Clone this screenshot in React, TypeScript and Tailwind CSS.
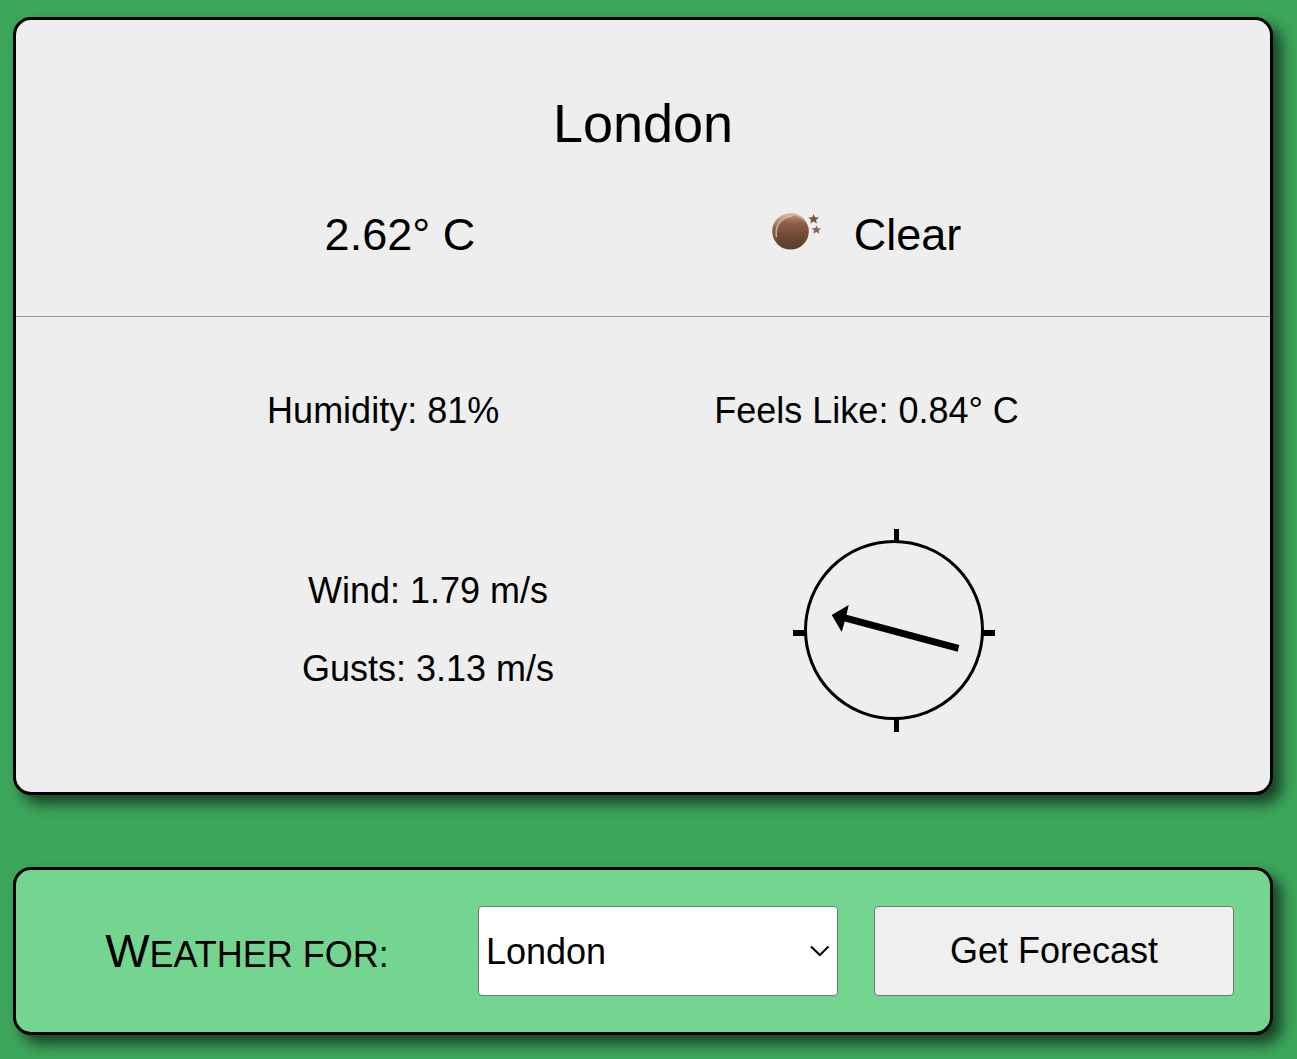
import { useState } from "react";

const cardShadow = "shadow-[9px_9px_14px_rgba(0,0,0,0.6)]";

function NightIcon() {
  return (
    <svg viewBox="-2 0 90 90" className="size-[90px] shrink-0" role="img" aria-label="Clear night">
      <defs>
        <linearGradient id="moonBody" x1="0" y1="0" x2="0" y2="1">
          <stop offset="0" stopColor="#b98c70" />
          <stop offset="0.25" stopColor="#8a5d44" />
          <stop offset="0.6" stopColor="#704a35" />
          <stop offset="1" stopColor="#5c3d2e" />
        </linearGradient>
        <linearGradient id="moonRim" x1="0" y1="0" x2="0" y2="1">
          <stop offset="0" stopColor="#dcc0af" />
          <stop offset="0.4" stopColor="#8a6049" />
          <stop offset="1" stopColor="#5a3b2c" />
        </linearGradient>
        <filter id="moonSoft">
          <feGaussianBlur stdDeviation="0.7" />
        </filter>
      </defs>
      <g filter="url(#moonSoft)">
        <circle cx="40.500" cy="41.300" r="18.300" fill="url(#moonRim)" />
        <circle cx="42" cy="42" r="16.300" fill="url(#moonBody)" />
        <path d="M26.500 47C24.500 36 31 27 42 26" fill="none" stroke="#e3c5b2" strokeWidth="1.500" opacity="0.8" />
        <path d="M63.500 24l1.500 3.300 3.900.2-2.900 2.400 1 3.600-3.400-2-3.200 2 .8-3.600-2.900-2.400 3.900-.2z" fill="#7b5340" />
        <path d="M66.500 35.500l1.300 2.900 3.400.2-2.600 2.100.8 3-2.800-1.600-3.300 1.500.8-3-2.600-2 3.600-.3z" fill="#8b614b" />
      </g>
    </svg>
  );
}

function WindCompass() {
  return (
    <svg viewBox="0 0 180 180" className="size-[180px] shrink-0 overflow-visible" role="img" aria-label="Wind direction">
      <circle cx="90" cy="90" r="88.500" fill="none" stroke="#000" strokeWidth="3" />
      <path d="M90-11h5V2h-5zM90 178h5v14h-5zM-11 90H2v6H-11zM178 90h13v6h-13z" />
      <path d="M27.700 75L44.700 65L42.500 74.800L155.300 105L153.700 111.700L40.700 81.500L37.700 92z" />
    </svg>
  );
}

export default function App() {
  const [city, setCity] = useState("London");
  return (
    <main className="flex min-h-screen flex-col gap-[72px] bg-[#3ca65b] pt-[17px] pr-6 pb-6 pl-[13px] font-['Liberation_Sans',Arial,sans-serif] text-4xl leading-[42px] text-black">
      <section className={`rounded-[18px] border-3 border-black bg-[#eee] ${cardShadow}`}>
        <header className="flex flex-col gap-9 border-b border-[#9a9a9a] pt-[72px] pb-9">
          <h1 className="text-center text-[54px] leading-[62px]">London</h1>
          <div className="flex items-center justify-evenly px-9 text-[45px] leading-[52px]">
            <p>2.62° C</p>
            <div className="flex items-center gap-4">
              <NightIcon />
              <p>Clear</p>
            </div>
          </div>
        </header>
        <div className="flex flex-col gap-[108px] pt-[73px] pb-[72px]">
          <div className="flex justify-evenly px-9">
            <p>Humidity: 81%</p>
            <p>Feels Like: 0.84° C</p>
          </div>
          <div className="flex items-center justify-evenly px-9">
            <div className="flex flex-col gap-9 text-center">
              <p>Wind: 1.79 m/s</p>
              <p>Gusts: 3.13 m/s</p>
            </div>
            <WindCompass />
          </div>
        </div>
      </section>

      <form
        className={`flex items-center gap-9 rounded-[18px] border-3 border-black bg-[#73d58f] p-9 ${cardShadow}`}
        onSubmit={(e) => e.preventDefault()}
      >
        <label htmlFor="city" className="block flex-1 pt-1 text-center uppercase first-letter:text-[47px]">
          Weather for:
        </label>
        <div className="relative w-[360px]">
          <select
            id="city"
            value={city}
            onChange={(e) => setCity(e.target.value)}
            className="h-[90px] w-full appearance-none rounded-[4px] border border-[#767676] bg-white px-[7px] pt-0.5"
          >
            <option>London</option>
            <option>Paris</option>
            <option>New York</option>
          </select>
          <svg viewBox="0 0 20 12" className="pointer-events-none absolute top-[39px] right-2 h-3 w-5" aria-hidden="true">
            <path d="M1 1.500L9.800 10l8.700-8.500" fill="none" stroke="#000" strokeWidth="2" />
          </svg>
        </div>
        <button type="submit" className="h-[90px] w-[360px] rounded-[4px] border border-[#767676] bg-[#efefef]">
          Get Forecast
        </button>
      </form>
    </main>
  );
}
